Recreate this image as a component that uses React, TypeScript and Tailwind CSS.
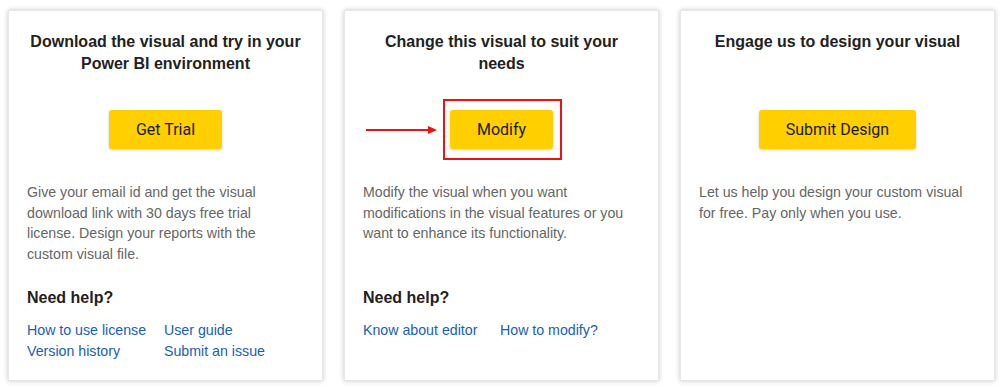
import React from "react";

const sans = { fontFamily: '"Liberation Sans", Arial, sans-serif' };

type LinkItem = { label: string };

interface CardProps {
  title: string;
  button: string;
  highlight?: boolean;
  description: string;
  links?: LinkItem[];
}

const Arrow = () => (
  <svg width="72" height="10" viewBox="0 0 72 10" className="absolute right-[calc(100%+7px)] top-1/2 -translate-y-1/2">
    <line x1="0" y1="5" x2="64" y2="5" stroke="#ee1111" strokeWidth="2" />
    <polygon points="62,1 71,5 62,9" fill="#ee1111" />
  </svg>
);

const Card = ({ title, button, highlight, description, links }: CardProps) => {
  return (
    <div className="w-[315px] h-[371px] bg-white border border-[#e6e6e6] shadow-[0_0_5px_rgba(0,0,0,0.22)] px-[18px] pt-[20px]">
      <h2 className="h-[44px] text-center text-[16px] leading-[22px] font-bold text-[#222]">
        {title}
      </h2>
      <div className="mt-[35px] flex justify-center">
        <div className="relative">
          {highlight && (
            <div className="absolute -left-[7px] -right-[9px] -top-[11px] -bottom-[11px] border-2 border-[#ee1111]">
              <Arrow />
            </div>
          )}
          <button
            className="relative h-[39px] px-[27px] rounded-[3px] bg-[#ffcf00] text-[16px] text-[#1a1a1a] shadow-[0_1px_3px_rgba(0,0,0,0.2)]"
            style={{ fontFamily: "Roboto, sans-serif" }}
          >
            {button}
          </button>
        </div>
      </div>
      <p className="mt-[33px] h-[84px] pr-[10px] text-[14.2px] leading-[20.5px] text-[#666]">
        {description}
      </p>
      {links && (
        <div>
          <h3 className="mt-[21px] text-[16px] leading-[22px] font-bold text-[#222]">
            Need help?
          </h3>
          <div className="mt-[11px] grid grid-cols-[137px_1fr] text-[14.2px] leading-[20.5px] text-[#1760b8]">
            {links.map((l) => (
              <a key={l.label} href="#" className="whitespace-nowrap">
                {l.label}
              </a>
            ))}
          </div>
        </div>
      )}
    </div>
  );
};

export default function App() {
  return (
    <div className="w-[1001px] h-[388px] bg-white pl-[8px] pt-[10px] flex gap-[21px]" style={sans}>
      <Card
        title="Download the visual and try in your Power BI environment"
        button="Get Trial"
        description="Give your email id and get the visual download link with 30 days free trial license. Design your reports with the custom visual file."
        links={[
          { label: "How to use license" },
          { label: "User guide" },
          { label: "Version history" },
          { label: "Submit an issue" },
        ]}
      />
      <Card
        title="Change this visual to suit your needs"
        button="Modify"
        highlight
        description="Modify the visual when you want modifications in the visual features or you want to enhance its functionality."
        links={[{ label: "Know about editor" }, { label: "How to modify?" }]}
      />
      <Card
        title="Engage us to design your visual"
        button="Submit Design"
        description="Let us help you design your custom visual for free. Pay only when you use."
      />
    </div>
  );
}
